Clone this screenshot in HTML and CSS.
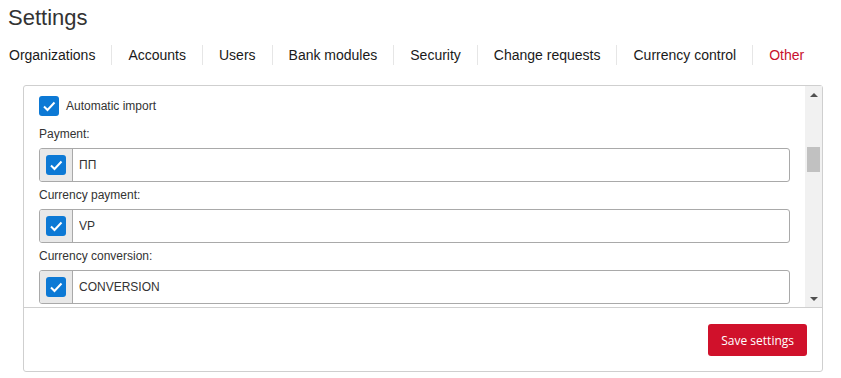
FILE: index.html
```html
<!DOCTYPE html>
<html lang="en">
<head>
    <meta charset="UTF-8">
    <title>Settings</title>
    <link rel="stylesheet" href="styles.css">
</head>
<body>
<div class="page">
    <h1 class="title">Settings</h1>

    <ul class="tabs">
        <li>Organizations</li>
        <li>Accounts</li>
        <li>Users</li>
        <li>Bank modules</li>
        <li>Security</li>
        <li>Change requests</li>
        <li>Currency control</li>
        <li class="active">Other</li>
    </ul>

    <div class="panel">
        <div class="panel-body">
            <div class="scroll-content">
                <label class="check-row">
                    <span class="check"><svg viewBox="0 0 20 20" width="20" height="20"><path d="M5 10.5 L8.5 14 L15.5 6.5" fill="none" stroke="#fff" stroke-width="2"/></svg></span>
                    Automatic import
                </label>

                <div class="field-label first">Payment:</div>
                <div class="input-group">
                    <span class="addon"><span class="check"><svg viewBox="0 0 20 20" width="20" height="20"><path d="M5 10.5 L8.5 14 L15.5 6.5" fill="none" stroke="#fff" stroke-width="2"/></svg></span></span>
                    <input type="text" value="ПП">
                </div>

                <div class="field-label">Currency payment:</div>
                <div class="input-group">
                    <span class="addon"><span class="check"><svg viewBox="0 0 20 20" width="20" height="20"><path d="M5 10.5 L8.5 14 L15.5 6.5" fill="none" stroke="#fff" stroke-width="2"/></svg></span></span>
                    <input type="text" value="VP">
                </div>

                <div class="field-label">Currency conversion:</div>
                <div class="input-group">
                    <span class="addon"><span class="check"><svg viewBox="0 0 20 20" width="20" height="20"><path d="M5 10.5 L8.5 14 L15.5 6.5" fill="none" stroke="#fff" stroke-width="2"/></svg></span></span>
                    <input type="text" value="CONVERSION">
                </div>
            </div>

            <!-- scrollbar -->
            <div class="scrollbar">
                <div class="arrow"><span class="tri-up"></span></div>
                <div class="track"><div class="thumb"></div></div>
                <div class="arrow"><span class="tri-down"></span></div>
            </div>
        </div>

        <div class="panel-footer">
            <button class="btn-save">Save settings</button>
        </div>
    </div>
</div>
</body>
</html>
```
FILE: styles.css
```css
body{
    margin:0;
    font-family: "Liberation Sans", Arial, sans-serif;
    color:#333;
}
.page{
    padding:0 8px;
}
.title{
    margin:0;
    padding-top:5px;
    font-size:22px;
    line-height:26px;
    font-weight:normal;
    color:#333;
}

/*tabs*/
.tabs{
    list-style:none;
    margin:14px 0 0 1px;
    padding:0;
    display:flex;
}
.tabs li{
    font-size:14px;
    line-height:20px;
    padding:0 16px;
    color:#1a1a1a;
    border-right:1px solid #e6e6e6;
}
.tabs li:first-child{ padding-left:0; }
.tabs li:last-child{ border-right:none; }
.tabs li.active{ color:#c8102e; }

/*panel*/
.panel{
    margin:20px 0 0 15px;
    width:800px;
    box-sizing:border-box;
    border:1px solid #cfcfcf;
    border-radius:3px;
}
.panel-body{
    display:flex;
    height:221px;
    border-bottom:1px solid #cfcfcf;
}
.scroll-content{
    flex:1;
    overflow:hidden;
    padding:10px 15px 0;
}
.check-row{
    display:flex;
    align-items:center;
    gap:7px;
    font-size:12px;
    height:20px;
}
.check{
    display:block;
    width:20px;
    height:20px;
    background:#0c79d5;
    border-radius:3px;
}
.check svg{ display:block; }

.field-label{
    font-size:12px;
    line-height:18px;
    margin:4px 0 5px;
}
.field-label.first{ margin-top:9px; }

.input-group{
    display:flex;
    height:34px;
    box-sizing:border-box;
    border:1px solid #a9a9a9;
    border-radius:3px;
}
.addon{
    display:flex;
    align-items:center;
    padding:0 6px;
    background:#e8e8e8;
    border-right:1px solid #a9a9a9;
    border-radius:2px 0 0 2px;
}
.input-group input{
    flex:1;
    border:none;
    outline:none;
    padding:0 6px;
    font-family: "Liberation Sans", Arial, sans-serif;
    font-size:12px;
    color:#333;
    background:transparent;
}

/*scrollbar*/
.scrollbar{
    width:17px;
    background:#f1f1f1;
    display:flex;
    flex-direction:column;
}
.arrow{
    height:17px;
    display:flex;
    align-items:center;
    justify-content:center;
}
.tri-up{
    border-left:4px solid transparent;
    border-right:4px solid transparent;
    border-bottom:4px solid #505050;
}
.tri-down{
    border-left:4px solid transparent;
    border-right:4px solid transparent;
    border-top:4px solid #505050;
}
.track{
    flex:1;
}
.thumb{
    margin:44px 2px 0;
    height:25px;
    background:#c1c1c1;
}

/*footer*/
.panel-footer{
    display:flex;
    justify-content:flex-end;
    padding:16px 15px 15px;
}
.btn-save{
    height:32px;
    padding:0 13px;
    border:none;
    border-radius:3px;
    background:#d0112b;
    color:#fff;
    font-family: "Open Sans", "Noto Sans", sans-serif;
    font-size:12px;
}
```
